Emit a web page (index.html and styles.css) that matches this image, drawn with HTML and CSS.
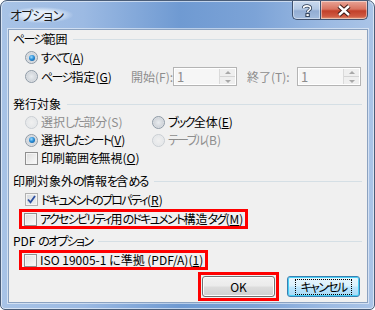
FILE: index.html
```html
<!DOCTYPE html>
<html lang="ja">
<head>
<meta charset="utf-8">
<link rel="stylesheet" href="styles.css">
</head>
<body>
<div class="window">
  <div class="titlebar">
    <span class="title">オプション</span>
    <div class="caption">
      <div class="cbtn help">
        <svg width="12" height="13" viewBox="0 0 12 13"><path d="M2.5 4.2 C2.5 1.2 9.5 1 9.5 4.2 C9.5 6.2 6.6 6.2 6.6 8.2" fill="none" stroke="#2a3a52" stroke-width="3.2"/><path d="M2.5 4.2 C2.5 1.2 9.5 1 9.5 4.2 C9.5 6.2 6.6 6.2 6.6 8.2" fill="none" stroke="#fff" stroke-width="1.6"/><rect x="4.9" y="9.6" width="3.4" height="3" fill="#fff" stroke="#2a3a52" stroke-width="1"/></svg>
      </div>
      <div class="cbtn close">
        <svg width="16" height="13" viewBox="0 0 16 13"><path d="M3 2 L13 11 M13 2 L3 11" stroke="#3b1a16" stroke-width="4.4"/><path d="M3 2 L13 11 M13 2 L3 11" stroke="#fff" stroke-width="2.4"/></svg>
      </div>
    </div>
  </div>
  <div class="client">
    <div class="ghead"><span><span class="k">ページ</span>範囲</span><i></i></div>
    <div class="row ind">
      <span class="radio on"></span><span><span class="k">すべて</span>(<u>A</u>)</span>
    </div>
    <div class="row ind">
      <span class="radio"></span><span class="lbl-w"><span class="k">ページ</span>指定(<u>G</u>)</span>
      <span class="dim spinlbl">開始(F):</span>
      <span class="spin"><span class="val">1</span><span class="arrows"><b class="up"></b><b class="dn"></b></span></span>
      <span class="dim spinlbl2">終了(T):</span>
      <span class="spin"><span class="val">1</span><span class="arrows"><b class="up"></b><b class="dn"></b></span></span>
    </div>

    <div class="ghead g2"><span>発行対象</span><i></i></div>
    <div class="grid2">
      <div class="row sm"><span class="radio dis"></span><span class="dim">選択<span class="k">した</span>部分(S)</span></div>
      <div class="row sm"><span class="radio"></span><span><span class="k">ブック</span>全体(<u>E</u>)</span></div>
      <div class="row sm"><span class="radio on"></span><span>選択<span class="k">したシート</span>(<u>V</u>)</span></div>
      <div class="row sm"><span class="radio dis"></span><span class="dim"><span class="k">テーブル</span>(B)</span></div>
      <div class="row sm"><span class="check"></span><span>印刷範囲<span class="k">を</span>無視(<u>O</u>)</span></div>
    </div>

    <div class="ghead g3"><span>印刷対象外<span class="k">の</span>情報<span class="k">を</span>含<span class="k">める</span></span><i></i></div>
    <div class="row ind">
      <span class="check checked"><svg width="9" height="9" viewBox="0 0 9 9"><path d="M1 4.5 L3.5 7.3 L8 1" fill="none" stroke="#2c4fa0" stroke-width="1.8"/></svg></span><span><span class="k">ドキュメントのプロパティ</span>(<u>R</u>)</span>
    </div>
    <div class="redrow">
      <div class="row"><span class="check"></span><span><span class="k">アクセシビリティ</span>用<span class="k">のドキュメント</span>構造<span class="k">タグ</span>(<u>M</u>)</span></div>
    </div>

    <div class="ghead g4"><span>PDF <span class="k">のオプション</span></span><i></i></div>
    <div class="redrow">
      <div class="row"><span class="check"></span><span>ISO 19005-1 に準拠 (PDF/A)(<u>1</u>)</span></div>
    </div>

    <div class="buttons">
      <div class="redbtn"><div class="btn">OK</div></div>
      <div class="btn focus"><span class="k">キャンセル</span></div>
    </div>
  </div>
</div>
</body>
</html>
```

FILE: styles.css
```css
html, body {
  margin: 0;
  padding: 0;
  background: #fff;
}
body {
  width: 375px;
  height: 310px;
  overflow: hidden;
  font-family: "Noto Sans CJK JP", "Liberation Sans", sans-serif;
  font-size: 12px;
  font-feature-settings: "palt";
  color: #000;
}
.k { letter-spacing: -1.7px; }
.window {
  width: 375px;
  height: 310px;
  box-sizing: border-box;
  border: 1px solid #4a5d78;
  border-radius: 7px 7px 5px 5px;
  background: linear-gradient(to right, #a8c3e6 0%, #9cbae3 22%, #6f9ad2 48%, #7ca3d7 68%, #9dbbe3 88%, #aac4e7 100%);
  box-shadow: inset 0 0 0 1px rgba(255,255,255,0.55);
  display: flex;
  flex-direction: column;
  padding: 0 6px 6px 7px;
}
.titlebar {
  height: 28px;
  display: flex;
  align-items: flex-start;
  justify-content: space-between;
  flex: none;
}
.title {
  margin-top: 6px;
  padding: 0 10px 0 2px;
  font-size: 13px;
  line-height: 16px;
  letter-spacing: -0.8px;
  color: #1a1a1a;
  background: radial-gradient(ellipse at center, rgba(235,243,252,0.9) 35%, rgba(235,243,252,0) 72%);
}
.caption {
  display: flex;
}
.cbtn {
  height: 18px;
  display: flex;
  align-items: center;
  justify-content: center;
  border: 1px solid #3f5270;
  border-top: none;
  box-shadow: inset 0 0 0 1px rgba(255,255,255,0.45);
}
.help {
  width: 27px;
  border-radius: 0 0 0 5px;
  border-right: none;
  background: linear-gradient(#c9d9ee 0%, #b3c8e4 45%, #93add3 55%, #a3bcdd 100%);
}
.close {
  width: 46px;
  border-radius: 0 0 5px 0;
  background: linear-gradient(#e8a496 0%, #d97461 45%, #c2402a 55%, #cf5a42 85%, #e09a7a 100%);
}
.client {
  flex: 1;
  background: #f0f0f0;
  border: 1px solid #8ba2c0;
  box-shadow: 0 0 0 1px rgba(255,255,255,0.5);
  display: flex;
  flex-direction: column;
  padding: 0 5px 0 4px;
}
.ghead {
  display: flex;
  align-items: center;
  height: 18px;
  line-height: 16px;
}
.ghead i {
  flex: 1;
  height: 0;
  border-top: 1px solid #d5dfe5;
  margin: 1px 0 0 6px;
}
.g2 { margin-top: 9px; }
.g3 { margin-top: 5px; }
.g4 { margin-top: 3px; }
.row {
  display: flex;
  align-items: center;
  height: 19px;
  line-height: 16px;
  white-space: nowrap;
}
.row.sm { height: 18px; }
.ind { padding-left: 12px; }
.row > span:nth-child(2) { margin-left: 3px; }
.dim { color: #8d8d8d; }
u { text-decoration: underline; text-underline-offset: 1px; }
.lbl-w { width: 90px; flex: none; }
.spinlbl { margin-left: 0; width: 42px; flex: none; }
.spinlbl2 { margin-left: 10px; width: 50px; flex: none; }
.grid2 {
  display: grid;
  grid-template-columns: 127px 1fr;
  padding-left: 12px;
}
.radio {
  width: 13px;
  height: 13px;
  border-radius: 50%;
  box-sizing: border-box;
  border: 1px solid #8e9aa6;
  background: radial-gradient(circle at 50% 50%, #e9ecef 0%, #d3d7dc 55%, #f4f5f6 100%);
  position: relative;
  flex: none;
}
.radio.dis {
  border-color: #c9ced3;
  background: radial-gradient(circle, #f0f0f0 0%, #e6e8ea 60%, #f7f7f7 100%);
}
.radio.on::after {
  content: "";
  position: absolute;
  left: 2.5px;
  top: 2.5px;
  width: 6px;
  height: 6px;
  border-radius: 50%;
  background: radial-gradient(circle at 40% 35%, #9fdcff 0%, #2a8fd8 45%, #0c4f8e 100%);
}
.check {
  width: 13px;
  height: 13px;
  box-sizing: border-box;
  border: 1px solid #8f8f8f;
  background: linear-gradient(135deg, #dcdcdc 0%, #f2f2f2 70%, #fbfbfb 100%);
  box-shadow: inset 0 0 0 1px #f4f4f4;
  flex: none;
  display: flex;
  align-items: center;
  justify-content: center;
}
.check.checked {
  border-color: #b1b1b1;
  background: linear-gradient(135deg, #d9dce0 0%, #eceef0 100%);
}
.spin {
  width: 64px;
  height: 19px;
  flex: none;
  box-sizing: border-box;
  border: 1px solid #b4b4b4;
  background: #f6f6f6;
  box-shadow: inset 0 0 0 1px #fff;
  display: flex;
  align-items: stretch;
}
.spin .val {
  flex: 1;
  color: #8d8d8d;
  font-size: 13px;
  padding-left: 3px;
  line-height: 17px;
}
.arrows {
  width: 15px;
  display: flex;
  flex-direction: column;
  border-left: 1px solid #dadada;
  margin: 1px 1px 1px 0;
}
.arrows b {
  flex: 1;
  background: #efefef;
  position: relative;
}
.arrows b.up { border-bottom: 1px solid #d4d4d4; }
.arrows b::after {
  content: "";
  position: absolute;
  left: 5px;
  width: 0;
  height: 0;
  border-left: 3px solid transparent;
  border-right: 3px solid transparent;
}
.arrows b.up::after { top: 2px; border-bottom: 3px solid #a8a8a8; }
.arrows b.dn::after { top: 3px; border-top: 3px solid #a8a8a8; }
.redrow {
  align-self: flex-start;
  margin-left: 6px;
  border: 3px solid #f00;
  padding: 0 2px 0 2px;
}
.redrow .row { height: 14px; }
.buttons {
  display: flex;
  justify-content: flex-end;
  align-items: center;
  gap: 8px;
  margin-top: 2px;
  padding-right: 2px;
}
.redbtn {
  border: 3px solid #f00;
  padding: 1px;
}
.btn {
  width: 73px;
  height: 21px;
  box-sizing: border-box;
  border: 1px solid #707070;
  border-radius: 3px;
  background: linear-gradient(#f2f2f2 0%, #ebebeb 48%, #dddddd 52%, #cfcfcf 100%);
  box-shadow: inset 0 0 0 1px #fcfcfc;
  display: flex;
  align-items: center;
  justify-content: center;
  line-height: 16px;
}
.btn.focus {
  border-color: #3c7fb1;
  box-shadow: inset 0 0 0 1px #48d0f6;
  background: linear-gradient(#eaf6fd 0%, #d9f0fc 48%, #bee6fd 52%, #a7d9f5 100%);
}
.btn.focus span {
  outline: 1px dotted #000;
  padding: 0 5px;
  line-height: 14px;
}
```
